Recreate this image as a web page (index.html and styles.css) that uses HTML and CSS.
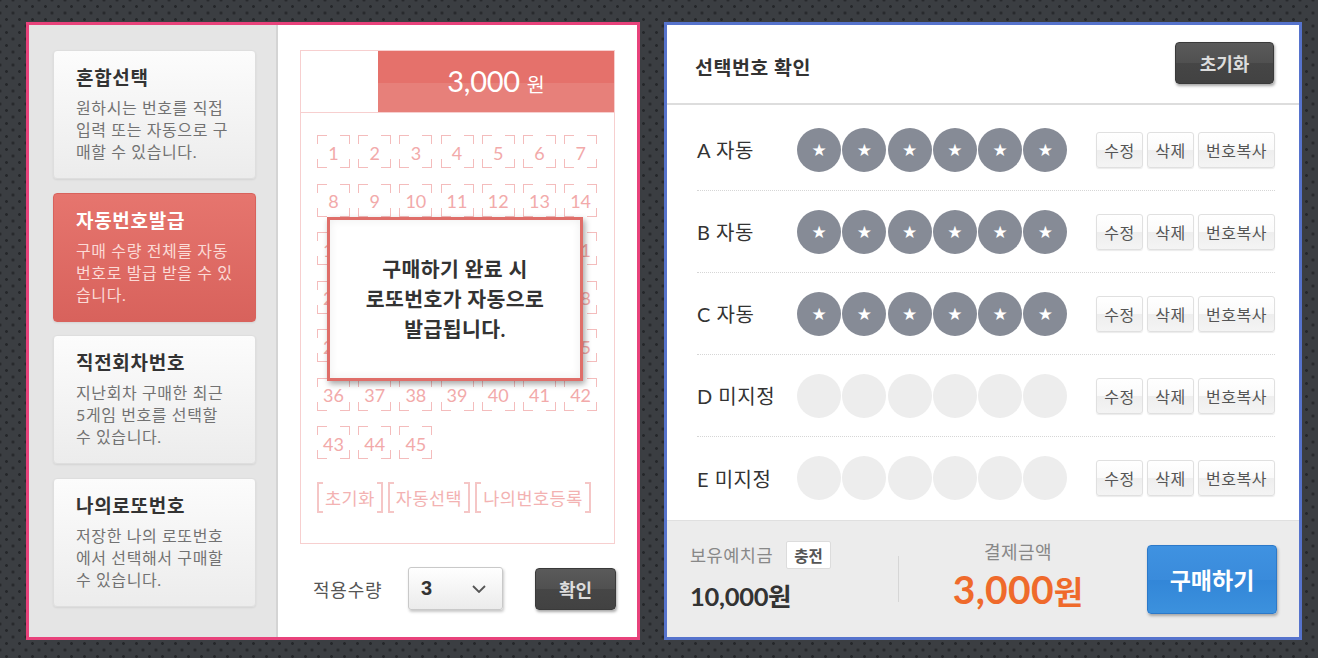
FILE: index.html
```html
<!DOCTYPE html>
<html lang="ko">
<head>
<meta charset="utf-8">
<title>로또 구매</title>
<link rel="stylesheet" href="styles.css">
</head>
<body>
<div class="page">
  <section class="panel panel-left">
    <aside class="sidebar">
      <div class="card">
        <h3 class="card-title">혼합선택</h3>
        <p class="card-desc">원하시는 번호를 직접<br>입력 또는 자동으로 구<br>매할 수 있습니다.</p>
      </div>
      <div class="card card-active">
        <h3 class="card-title">자동번호발급</h3>
        <p class="card-desc">구매 수량 전체를 자동<br>번호로 발급 받을 수 있<br>습니다.</p>
      </div>
      <div class="card">
        <h3 class="card-title">직전회차번호</h3>
        <p class="card-desc">지난회차 구매한 최근<br>5게임 번호를 선택할<br>수 있습니다.</p>
      </div>
      <div class="card">
        <h3 class="card-title">나의로또번호</h3>
        <p class="card-desc">저장한 나의 로또번호<br>에서 선택해서 구매할<br>수 있습니다.</p>
      </div>
    </aside>
    <div class="picker">
      <div class="slip">
        <div class="slip-head">
          <div class="slip-blank"></div>
          <div class="slip-price"><span class="price-num">3,000</span><span class="price-won">원</span></div>
        </div>
        <div class="slip-body">
          <div class="grid">
            <span class="cell">1</span><span class="cell">2</span><span class="cell">3</span><span class="cell">4</span><span class="cell">5</span><span class="cell">6</span><span class="cell">7</span>
            <span class="cell">8</span><span class="cell">9</span><span class="cell">10</span><span class="cell">11</span><span class="cell">12</span><span class="cell">13</span><span class="cell">14</span>
            <span class="cell">15</span><span class="cell">16</span><span class="cell">17</span><span class="cell">18</span><span class="cell">19</span><span class="cell">20</span><span class="cell">21</span>
            <span class="cell">22</span><span class="cell">23</span><span class="cell">24</span><span class="cell">25</span><span class="cell">26</span><span class="cell">27</span><span class="cell">28</span>
            <span class="cell">29</span><span class="cell">30</span><span class="cell">31</span><span class="cell">32</span><span class="cell">33</span><span class="cell">34</span><span class="cell">35</span>
            <span class="cell">36</span><span class="cell">37</span><span class="cell">38</span><span class="cell">39</span><span class="cell">40</span><span class="cell">41</span><span class="cell">42</span>
            <span class="cell">43</span><span class="cell">44</span><span class="cell">45</span>
          </div>
          <div class="slip-actions">
            <span class="bracket">초기화</span>
            <span class="bracket">자동선택</span>
            <span class="bracket">나의번호등록</span>
          </div>
        </div>
        <div class="popup">
          <p class="popup-text">구매하기 완료 시<br>로또번호가 자동으로<br>발급됩니다.</p>
        </div>
      </div>
      <div class="apply">
        <span class="apply-label">적용수량</span>
        <div class="select">
          <span class="select-value">3</span>
          <svg class="chevron" width="14" height="8" viewBox="0 0 14 8"><polyline points="1,1 7,7 13,1" fill="none" stroke="#555" stroke-width="1.8"/></svg>
        </div>
        <button class="btn-dark btn-confirm">확인</button>
      </div>
    </div>
  </section>

  <section class="panel panel-right">
    <header class="sel-head">
      <h2 class="sel-title">선택번호 확인</h2>
      <button class="btn-dark btn-reset">초기화</button>
    </header>
    <div class="rows">
      <div class="row">
        <span class="row-label">A 자동</span>
        <div class="balls"><span class="ball">★</span><span class="ball">★</span><span class="ball">★</span><span class="ball">★</span><span class="ball">★</span><span class="ball">★</span></div>
        <div class="row-btns"><span class="mini">수정</span><span class="mini">삭제</span><span class="mini">번호복사</span></div>
      </div>
      <div class="row">
        <span class="row-label">B 자동</span>
        <div class="balls"><span class="ball">★</span><span class="ball">★</span><span class="ball">★</span><span class="ball">★</span><span class="ball">★</span><span class="ball">★</span></div>
        <div class="row-btns"><span class="mini">수정</span><span class="mini">삭제</span><span class="mini">번호복사</span></div>
      </div>
      <div class="row">
        <span class="row-label">C 자동</span>
        <div class="balls"><span class="ball">★</span><span class="ball">★</span><span class="ball">★</span><span class="ball">★</span><span class="ball">★</span><span class="ball">★</span></div>
        <div class="row-btns"><span class="mini">수정</span><span class="mini">삭제</span><span class="mini">번호복사</span></div>
      </div>
      <div class="row">
        <span class="row-label">D 미지정</span>
        <div class="balls"><span class="ball ball-empty"></span><span class="ball ball-empty"></span><span class="ball ball-empty"></span><span class="ball ball-empty"></span><span class="ball ball-empty"></span><span class="ball ball-empty"></span></div>
        <div class="row-btns"><span class="mini">수정</span><span class="mini">삭제</span><span class="mini">번호복사</span></div>
      </div>
      <div class="row">
        <span class="row-label">E 미지정</span>
        <div class="balls"><span class="ball ball-empty"></span><span class="ball ball-empty"></span><span class="ball ball-empty"></span><span class="ball ball-empty"></span><span class="ball ball-empty"></span><span class="ball ball-empty"></span></div>
        <div class="row-btns"><span class="mini">수정</span><span class="mini">삭제</span><span class="mini">번호복사</span></div>
      </div>
    </div>
    <footer class="pay">
      <div class="balance">
        <div class="balance-top">
          <span class="balance-label">보유예치금</span>
          <span class="charge">충전</span>
        </div>
        <div class="balance-amount">10,000원</div>
      </div>
      <div class="pay-divider"></div>
      <div class="total">
        <div class="total-label">결제금액</div>
        <div class="total-amount"><span class="total-num">3,000</span><span class="total-won">원</span></div>
      </div>
      <button class="btn-buy">구매하기</button>
    </footer>
  </section>
</div>
</body>
</html>
```

FILE: styles.css
```css
html, body {
  margin: 0;
  padding: 0;
}
body {
  width: 1318px;
  height: 658px;
  overflow: hidden;
  background-color: #3b3e42;
  background-image:
    radial-gradient(circle, #25272a 1.1px, transparent 1.7px),
    radial-gradient(circle, #25272a 1.1px, transparent 1.7px);
  background-size: 13px 13px;
  background-position: 0 0, 6.5px 6.5px;
  font-family: Lato, "Noto Sans CJK KR", sans-serif;
  color: #333;
}
button {
  font-family: inherit;
  cursor: pointer;
}

.page {
  display: flex;
  gap: 24px;
  padding: 22px 0 0 26px;
}

.panel {
  box-sizing: border-box;
  height: 618px;
  border: 3px solid;
  background: #fff;
}

/* ---------- left panel ---------- */
.panel-left {
  width: 614px;
  border-color: #e8427b;
  display: flex;
}
.sidebar {
  box-sizing: border-box;
  width: 249px;
  background: #e5e5e5;
  border-right: 2px solid #d4d4d4;
  padding: 25px 0 0 24px;
  display: flex;
  flex-direction: column;
  gap: 13.5px;
}
.card {
  box-sizing: border-box;
  width: 203px;
  height: 129px;
  padding: 15px 0 0 22px;
  border: 1px solid #dedede;
  border-radius: 4px;
  background: linear-gradient(#fcfcfc, #ececec);
  box-shadow: 0 1px 2px rgba(0, 0, 0, 0.08);
}
.card-title {
  margin: 0;
  font-size: 19px;
  line-height: 24px;
  letter-spacing: 0.7px;
  font-weight: 700;
  color: #333;
  white-space: nowrap;
}
.card-desc {
  margin: 7px 0 0;
  font-size: 16px;
  line-height: 22px;
  letter-spacing: 0.6px;
  color: #727272;
  white-space: nowrap;
}
.card-active {
  border-color: #d8625c;
  background: linear-gradient(#e6756e, #d8625c);
}
.card-active .card-title {
  color: #fff;
}
.card-active .card-desc {
  color: #fbdad6;
}

.picker {
  flex: 1;
  padding: 25px 22px 0 22px;
}
.slip {
  position: relative;
  border: 1px solid #f7cfcf;
}
.slip-head {
  display: flex;
  height: 61px;
  border-bottom: 1px solid #f7cfcf;
}
.slip-blank {
  width: 77px;
}
.slip-price {
  flex: 1;
  display: flex;
  align-items: baseline;
  justify-content: center;
  padding-top: 12px;
  box-sizing: border-box;
  color: #fff;
  background: linear-gradient(#e5716b 0, #e5716b 52%, #e7807a 52%, #e7807a 100%);
}
.price-num {
  font-size: 29px;
  line-height: 36px;
  letter-spacing: -0.3px;
}
.price-won {
  font-size: 19.5px;
  margin-left: 7px;
}

.slip-body {
  padding: 22px 16px 30px 16px;
}
.grid {
  display: grid;
  grid-template-columns: repeat(7, 33px);
  grid-auto-rows: 33px;
  column-gap: 8.2px;
  row-gap: 15.5px;
}
.cell {
  --c: #f4bcbc;
  display: flex;
  align-items: center;
  justify-content: center;
  padding-top: 2px;
  box-sizing: border-box;
  font-size: 18px;
  color: #f2aaaa;
  background:
    linear-gradient(var(--c), var(--c)) 0 0 / 10px 1px,
    linear-gradient(var(--c), var(--c)) 0 0 / 1px 9px,
    linear-gradient(var(--c), var(--c)) 100% 0 / 10px 1px,
    linear-gradient(var(--c), var(--c)) 100% 0 / 1px 9px,
    linear-gradient(var(--c), var(--c)) 0 100% / 10px 1px,
    linear-gradient(var(--c), var(--c)) 0 100% / 1px 9px,
    linear-gradient(var(--c), var(--c)) 100% 100% / 10px 1px,
    linear-gradient(var(--c), var(--c)) 100% 100% / 1px 9px;
  background-repeat: no-repeat;
}
.slip-actions {
  display: flex;
  gap: 5px;
  margin-top: 23px;
}
.bracket {
  --b: #f5c6c6;
  box-sizing: border-box;
  height: 31px;
  padding: 0 8px;
  display: flex;
  align-items: center;
  font-size: 17.5px;
  letter-spacing: 0.5px;
  color: #f3b2b2;
  white-space: nowrap;
  background:
    linear-gradient(var(--b), var(--b)) 0 0 / 2px 100%,
    linear-gradient(var(--b), var(--b)) 100% 0 / 2px 100%,
    linear-gradient(var(--b), var(--b)) 0 0 / 6px 2px,
    linear-gradient(var(--b), var(--b)) 0 100% / 6px 2px,
    linear-gradient(var(--b), var(--b)) 100% 0 / 6px 2px,
    linear-gradient(var(--b), var(--b)) 100% 100% / 6px 2px;
  background-repeat: no-repeat;
}

.popup {
  position: absolute;
  left: 26px;
  top: 166px;
  box-sizing: border-box;
  width: 256px;
  height: 164px;
  border: 3px solid #df6e69;
  background: #fff;
  box-shadow: 2px 3px 6px rgba(0, 0, 0, 0.35), inset 0 0 10px rgba(0, 0, 0, 0.07);
  display: flex;
  align-items: center;
  justify-content: center;
}
.popup-text {
  margin: 0;
  text-align: center;
  font-size: 20.5px;
  line-height: 30px;
  letter-spacing: 0.4px;
  font-weight: 700;
  color: #333;
  white-space: nowrap;
}

.apply {
  display: flex;
  align-items: center;
  height: 43px;
  margin-top: 23px;
}
.apply-label {
  margin-left: 13px;
  width: 72px;
  font-size: 18px;
  letter-spacing: 0.8px;
  color: #555;
  white-space: nowrap;
}
.select {
  margin-left: 23px;
  box-sizing: border-box;
  width: 95px;
  height: 43px;
  padding: 0 16px 0 12px;
  display: flex;
  align-items: center;
  justify-content: space-between;
  border: 1px solid #c9c9c9;
  border-radius: 3px;
  background: linear-gradient(#ffffff, #ebebeb);
  box-shadow: 1px 2px 3px rgba(0, 0, 0, 0.22);
}
.select-value {
  font-family: "Liberation Sans", Arial, sans-serif;
  font-weight: 700;
  font-size: 20px;
  color: #333;
}
.chevron {
  display: block;
}
.btn-dark {
  box-sizing: border-box;
  border: 1px solid #3a3a3a;
  border-radius: 4px;
  background: linear-gradient(#5a5a5a 0, #505050 50%, #464646 50%, #424242 100%);
  color: #dcdcdc;
  font-size: 18px;
  font-weight: 700;
  box-shadow: 1px 2px 3px rgba(0, 0, 0, 0.35);
  padding: 0;
}
.btn-confirm {
  margin-left: auto;
  margin-right: -1px;
  width: 81px;
  height: 42px;
}

/* ---------- right panel ---------- */
.panel-right {
  width: 638px;
  border-color: #5673cc;
  display: flex;
  flex-direction: column;
}
.sel-head {
  box-sizing: border-box;
  height: 80px;
  padding: 0 25px 0 28px;
  display: flex;
  align-items: center;
  justify-content: space-between;
  border-bottom: 2px solid #dddddd;
}
.sel-title {
  margin: 4px 0 0;
  font-size: 19.5px;
  letter-spacing: 0.5px;
  font-weight: 700;
  color: #333;
}
.btn-reset {
  width: 99px;
  height: 42px;
  margin-top: -3px;
}
.rows {
  padding: 4px 24px 1px 30px;
}
.row {
  box-sizing: border-box;
  height: 82px;
  display: flex;
  align-items: center;
  border-bottom: 1px dotted #d6d6d6;
}
.row:last-child {
  border-bottom: none;
}
.row-label {
  width: 100px;
  font-size: 20px;
  letter-spacing: 0.5px;
  color: #333;
  white-space: nowrap;
}
.balls {
  display: flex;
  gap: 1.3px;
}
.ball {
  width: 44px;
  height: 44px;
  border-radius: 50%;
  background: #868b96;
  color: #fff;
  display: flex;
  align-items: center;
  justify-content: center;
  font-family: "DejaVu Sans", sans-serif;
  font-size: 17px;
}
.ball-empty {
  background: #ededed;
}
.row-btns {
  margin-left: auto;
  display: flex;
  gap: 4.5px;
}
.mini {
  box-sizing: border-box;
  height: 36px;
  padding: 0 7px;
  display: flex;
  align-items: center;
  border: 1px solid #e0e0e0;
  border-radius: 3px;
  background: linear-gradient(#ffffff 0, #fafafa 50%, #eeeeee 50%, #f4f4f4 100%);
  box-shadow: 0 1px 1px rgba(0, 0, 0, 0.08);
  font-size: 16px;
  letter-spacing: 0.5px;
  color: #555;
  white-space: nowrap;
}

.pay {
  flex: 1;
  display: flex;
  align-items: center;
  padding: 0 22px 0 23px;
  background: #ececec;
  border-top: 1px solid #e0e0e0;
}
.balance {
  width: 208px;
  margin-top: -6px;
}
.balance-top {
  display: flex;
  align-items: center;
  gap: 13px;
}
.balance-label {
  font-size: 17.5px;
  letter-spacing: 0.5px;
  color: #888;
  white-space: nowrap;
}
.charge {
  box-sizing: border-box;
  width: 45px;
  height: 28px;
  display: flex;
  align-items: center;
  justify-content: center;
  background: #fff;
  border: 1px solid #dcdcdc;
  border-radius: 2px;
  font-size: 15.5px;
  font-weight: 700;
  color: #555;
}
.balance-amount {
  margin-top: 11px;
  font-size: 25.5px;
  line-height: 32px;
  font-weight: 700;
  color: #333;
  letter-spacing: -0.3px;
  white-space: nowrap;
}
.pay-divider {
  width: 1px;
  height: 46px;
  background: #d6d6d6;
}
.total {
  flex: 1;
  padding-right: 10px;
  text-align: center;
}
.total-label {
  font-size: 18px;
  line-height: 24px;
  letter-spacing: 0.5px;
  color: #888;
}
.total-amount {
  margin-top: 4px;
  line-height: 42px;
  color: #ef6a2b;
  white-space: nowrap;
}
.total-num {
  font-size: 39px;
  font-weight: 700;
  letter-spacing: 0.3px;
}
.total-won {
  font-size: 32px;
  font-weight: 700;
}
.btn-buy {
  width: 130px;
  height: 69px;
  border: 1px solid #2c79c9;
  border-radius: 4px;
  background: linear-gradient(#3f92e1 0, #3a8bdb 50%, #3286d8 50%, #3c91dd 100%);
  color: #fff;
  font-size: 23px;
  font-weight: 700;
  box-shadow: 1px 2px 3px rgba(0, 0, 0, 0.3);
  padding: 0;
}
```
